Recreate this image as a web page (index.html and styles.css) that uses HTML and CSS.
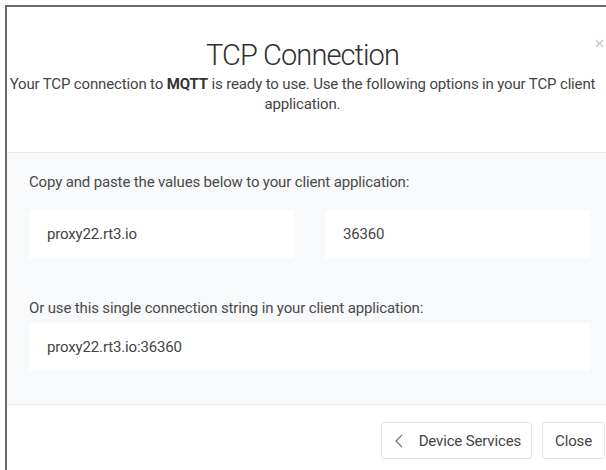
FILE: index.html
```html
<!DOCTYPE html>
<html lang="en">
<head>
<meta charset="utf-8">
<title>TCP Connection</title>
<link rel="stylesheet" href="styles.css">
</head>
<body>
<div class="modal">
  <header class="modal-header">
    <button class="modal-close" type="button" aria-label="Close">
      <svg width="9" height="9" viewBox="0 0 9 9" aria-hidden="true"><path d="M1 1L8 8M8 1L1 8" stroke="#c8c8c8" stroke-width="1.4" fill="none"/></svg>
    </button>
    <h1 class="modal-title">TCP Connection</h1>
    <p class="modal-subtitle">Your TCP connection to <strong>MQTT</strong> is ready to use. Use the following options in your TCP client application.</p>
  </header>
  <section class="modal-body">
    <p class="hint hint-first">Copy and paste the values below to your client application:</p>
    <div class="field-row">
      <div class="field">proxy22.rt3.io</div>
      <div class="field">36360</div>
    </div>
    <p class="hint hint-second">Or use this single connection string in your client application:</p>
    <div class="field">proxy22.rt3.io:36360</div>
  </section>
  <footer class="modal-footer">
    <button class="btn btn-back" type="button">
      <svg class="chev" width="8" height="14" viewBox="0 0 8 14" aria-hidden="true"><polyline points="7,0.8 1,7 7,13.2" stroke="#666666" stroke-width="1.1" fill="none"/></svg>
      Device Services
    </button>
    <button class="btn" type="button">Close</button>
  </footer>
</div>
</body>
</html>
```
FILE: styles.css
```css
html, body {
  margin: 0;
  padding: 0;
  overflow: hidden;
  background: #ffffff;
}

body {
  font-family: Roboto, "Liberation Sans", sans-serif;
  color: #3c3c3c;
}

.modal {
  margin: 5px 0 0 5px;
  width: 600px;
  border-top: 2px solid #6a6a6a;
  border-left: 2px solid #6a6a6a;
  background: #ffffff;
}

.modal-header {
  position: relative;
  height: 145px;
  padding-right: 9px;
  text-align: center;
  border-bottom: 1px solid #ebebeb;
}

.modal-close {
  position: absolute;
  top: 32px;
  right: 3px;
  padding: 0;
  border: 0;
  background: none;
  line-height: 0;
  cursor: pointer;
}

.modal-title {
  margin: 0;
  padding-top: 31px;
  font-size: 29px;
  font-weight: 300;
  line-height: 34px;
  letter-spacing: -0.9px;
  color: #2f2f2f;
}

.modal-subtitle {
  margin: 2px 0 0;
  font-size: 15px;
  line-height: 20px;
  letter-spacing: -0.15px;
  color: #444444;
}

.modal-subtitle strong {
  font-weight: 700;
  color: #333333;
}

.modal-body {
  background: #f8f9fb;
  padding: 19px 17px 33px 22px;
  border-bottom: 1px solid #ebebeb;
}

.hint {
  margin: 0;
  font-size: 15px;
  line-height: 20px;
  letter-spacing: -0.15px;
  color: #4a4a4a;
}

.hint-first {
  margin-bottom: 18px;
}

.hint-second {
  margin-bottom: 5px;
}

.field-row {
  display: grid;
  grid-template-columns: 1fr 1fr;
  column-gap: 31px;
  margin-bottom: 40px;
}

.field {
  background: #ffffff;
  height: 48px;
  padding: 0 18px;
  display: flex;
  align-items: center;
  font-size: 15px;
  letter-spacing: -0.15px;
  color: #444444;
}

.modal-footer {
  display: flex;
  justify-content: flex-end;
  gap: 10px;
  padding: 17px 2px 20px 0;
}

.btn {
  height: 37px;
  padding: 0 12px;
  border: 1px solid #e3e3e3;
  border-radius: 3px;
  background: #ffffff;
  font-family: Roboto, "Liberation Sans", sans-serif;
  font-size: 15px;
  letter-spacing: -0.15px;
  color: #444444;
  display: flex;
  align-items: center;
}

.btn-back {
  padding: 0 10px 0 13px;
}

.chev {
  margin-right: 16px;
}
```
